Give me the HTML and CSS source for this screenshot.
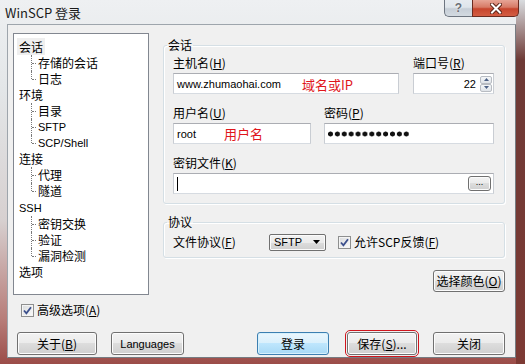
FILE: index.html
```html
<!doctype html>
<html>
<head>
	<meta charset="utf-8">
	<title>WinSCP 登录</title>
	<link rel="stylesheet" href="styles.css">
</head>
<body>
	<div class="window">
		<div class="titlebar">
			<span class="title">WinSCP 登录</span>
			<div class="caption">
				<span class="cap help">?</span>
				<span class="cap close">
					<svg width="12" height="11" viewBox="0 0 12 11">
						<path d="M2 1.5 L10 9.5 M10 1.5 L2 9.5" stroke="#5b2418" stroke-width="4" stroke-linecap="square"/>
						<path d="M2 1.5 L10 9.5 M10 1.5 L2 9.5" stroke="#fff" stroke-width="2" stroke-linecap="square"/>
					</svg>
				</span>
			</div>
		</div>

		<div class="client">
			<div class="main">
				<div class="left">
					<ul class="tree">
						<li><span class="sel">会话</span>
							<ul class="sub">
								<li>存储的会话</li>
								<li>日志</li>
							</ul>
						</li>
						<li>环境
							<ul class="sub">
								<li>目录</li>
								<li class="lat">SFTP</li>
								<li class="lat">SCP/Shell</li>
							</ul>
						</li>
						<li>连接
							<ul class="sub">
								<li>代理</li>
								<li>隧道</li>
							</ul>
						</li>
						<li><span class="lat">SSH</span>
							<ul class="sub">
								<li>密钥交换</li>
								<li>验证</li>
								<li>漏洞检测</li>
							</ul>
						</li>
						<li>选项</li>
					</ul>
					<div class="check adv">
						<span class="cbox"><svg width="9" height="9" viewBox="0 0 9 9"><path d="M1 4.5 L3.4 7.3 L8 1.2" fill="none" stroke="#3b4f8c" stroke-width="1.8"/></svg></span>
						<span>高级选项(<u>A</u>)</span>
					</div>
				</div>

				<div class="right">
					<fieldset class="group session">
						<legend>会话</legend>
						<div class="row">
							<div class="field host">
								<label>主机名(<u>H</u>)</label>
								<div class="edit">www.zhumaohai.com<span class="note note-host">域名或IP</span></div>
							</div>
							<div class="field port">
								<label>端口号(<u>R</u>)</label>
								<div class="edit num">
									<span class="val">22</span>
									<span class="spin">
										<span class="sp up"><svg width="5" height="3" viewBox="0 0 5 3"><path d="M0 3 L2.5 0 L5 3Z" fill="#4d6185"/></svg></span>
										<span class="sp dn"><svg width="5" height="3" viewBox="0 0 5 3"><path d="M0 0 L2.5 3 L5 0Z" fill="#4d6185"/></svg></span>
									</span>
								</div>
							</div>
						</div>
						<div class="row row-2">
							<div class="field user">
								<label>用户名(<u>U</u>)</label>
								<div class="edit">root<span class="note note-user">用户名</span></div>
							</div>
							<div class="field pass">
								<label>密码(<u>P</u>)</label>
								<div class="edit"><span class="dots"></span></div>
							</div>
						</div>
						<div class="row">
							<div class="field key">
								<label>密钥文件(<u>K</u>)</label>
								<div class="edit">
									<span class="caret"></span>
									<span class="browse">...</span>
								</div>
							</div>
						</div>
					</fieldset>

					<fieldset class="group proto">
						<legend>协议</legend>
						<div class="proto-row">
							<span class="proto-label">文件协议(<u>F</u>)</span>
							<span class="combo"><span>SFTP</span><svg width="7" height="4" viewBox="0 0 7 4"><path d="M0 0 L7 0 L3.5 4Z" fill="#000"/></svg></span>
							<span class="check">
								<span class="cbox"><svg width="9" height="9" viewBox="0 0 9 9"><path d="M1 4.5 L3.4 7.3 L8 1.2" fill="none" stroke="#3b4f8c" stroke-width="1.8"/></svg></span>
								<span>允许SCP反馈(<u>F</u>)</span>
							</span>
						</div>
					</fieldset>

					<div class="color-row">
						<span class="btn btn-color">选择颜色(<u>O</u>)</span>
					</div>
				</div>
			</div>

			<div class="buttons">
				<div class="grp">
					<span class="btn btn-about">关于(<u>B</u>)</span>
					<span class="btn btn-lang">Languages</span>
				</div>
				<div class="grp">
					<span class="btn btn-default">登录</span>
					<span class="btn btn-save">保存(<u>S</u>)...</span>
					<span class="btn btn-close">关闭</span>
				</div>
			</div>
		</div>
	</div>
</body>
</html>
```

FILE: styles.css
```css
* { margin: 0; padding: 0; box-sizing: border-box; }
body { width: 525px; height: 364px; overflow: hidden; font: 12px "Noto Sans CJK SC", "Liberation Sans", sans-serif; color: #000; }
u { text-decoration: underline; text-underline-offset: 1px; }

/* window frame */
.window { width: 525px; height: 364px; display: flex; flex-direction: column;
	background:
		linear-gradient(to bottom, #d9dcdf 0, #6e3a36 60px, #7d3a34 100%) right top / 9px 100% no-repeat,
		linear-gradient(to bottom, #eef0f2 0, #e3e6e8 90px, #d7d0d0 220px, #b77c78 320px, #9b4c48 100%); }
.titlebar { height: 24px; display: flex; justify-content: space-between; }
.title { padding: 4px 0 0 5px; font-size: 13px; line-height: 17px; color: #1a1a1a; }
.caption { display: flex; height: 17px; margin-right: 6px; }
.cap { display: flex; align-items: center; justify-content: center; height: 17px; border: 1px solid #6d7580; border-top: 0; }
.help { width: 28px; border-radius: 0 0 0 5px; border-right: 0; color: #6a6f76; font: bold 12px "Liberation Sans", sans-serif; text-shadow: 0 0 2px #fff;
	background: linear-gradient(#e6ebf0 0, #dfe5eb 45%, #c6ced7 55%, #d3dae1 100%); }
.close { width: 47px; border-color: #6b2b20; border-radius: 0 0 5px 0;
	background: linear-gradient(#e7a596 0, #d77a66 45%, #c7452d 55%, #d35d43 100%); }

/* client area */
.client { width: 509px; height: 334px; margin-left: 7px; display: flex; flex-direction: column;
	background: #f0f0f0; border: 1px solid #9ea5ac; border-right-color: #767c82; border-bottom-color: #767c82;
	padding: 8px 10px 2px 5px; }
.main { display: flex; gap: 14px; }
.left { width: 136px; }
.right { width: 342px; }

/* tree */
.tree { height: 262px; list-style: none; background: #fff; border: 1px solid #828790; padding: 5px 0 0 5px; line-height: 16px; }
.tree ul { list-style: none; }
.tree .sel { background: #efefef; margin-left: -2px; padding: 0 2px; }
.tree .lat, .lat { font: 11px "Liberation Sans", sans-serif; line-height: 16px; }
.sub li { position: relative; padding-left: 19px; }
.sub li::before { content: ""; position: absolute; left: 12px; top: 0; height: 100%; border-left: 1px dotted #7a7a7a; }
.sub li:last-child::before { height: 8px; }
.sub li::after { content: ""; position: absolute; left: 13px; top: 8px; width: 4px; border-top: 1px dotted #7a7a7a; }

/* checkbox */
.check { display: flex; align-items: center; gap: 3px; line-height: 16px; }
.adv { margin: 7px 0 0 8px; }
.cbox { width: 13px; height: 13px; border: 1px solid #8e8f8f; background: linear-gradient(135deg, #d8dadc, #fbfbfb);
	box-shadow: inset 0 0 0 1px #f4f4f4; display: flex; align-items: center; justify-content: center; }

/* group boxes */
.group { border: 1px solid #d5dfe5; border-radius: 3px; box-shadow: inset 1px 1px 0 #fff, 1px 1px 0 #fff; padding: 0 10px 9px 9px; }
.group legend { margin-left: -6px; padding: 0 1px; line-height: 16px; }
.session { margin-top: 4px; padding-top: 2px; }
.row { display: flex; gap: 14px; }
.row + .row { margin-top: 11px; }
.row-2 { gap: 13px; }
.field label { display: block; line-height: 16px; margin-bottom: 2px; }
.edit { height: 21px; display: flex; align-items: center; position: relative; background: #fff; padding: 0 3px;
	border: 1px solid; border-color: #abadb3 #c9cdd3 #d6dbe1 #c9cdd3; font: 11px "Liberation Sans", sans-serif; }
.host { width: 226px; }
.port { width: 81px; }
.user { width: 138px; }
.pass { width: 170px; }
.key { width: 321px; }
.note { position: absolute; top: 2px; color: #e0161b; font: 13px "Noto Sans CJK SC", sans-serif; line-height: 17px; }
.note-host { left: 128px; }
.note-user { left: 50px; top: 1px; }
.num { justify-content: flex-end; padding-right: 1px; }
.num .val { margin-right: 4px; }
.spin { display: flex; flex-direction: column; gap: 0; }
.sp { width: 12px; height: 8px; display: flex; align-items: center; justify-content: center; border: 1px solid #b8bcc2; border-radius: 2px;
	background: linear-gradient(#f5f7f9, #dfe3e8); }
.dots { width: 82px; height: 6px; background: radial-gradient(circle at 2.5px 3px, #111 2.2px, transparent 2.8px) 0 0 / 6.9px 6px repeat-x; }
.caret { width: 1px; height: 14px; background: #000; }
.browse { margin-left: auto; margin-right: -1px; width: 23px; height: 15px; border: 1px solid #707070; border-radius: 3px;
	background: linear-gradient(#f2f2f2 0, #ebebeb 50%, #dddddd 50%, #cfcfcf 100%); box-shadow: inset 0 0 0 1px #fbfbfb;
	font-size: 9px; line-height: 11px; text-align: center; }

.proto { margin-top: 10px; padding-bottom: 5px; }
.proto-row { display: flex; align-items: center; height: 20px; margin-top: 2px; }
.proto-label { width: 96px; line-height: 16px; }
.combo { width: 57px; height: 17px; display: flex; align-items: center; justify-content: space-between; padding: 0 5px 0 4px; margin-right: 12px;
	border: 1px solid #707070; border-radius: 2px; background: linear-gradient(#f2f2f2 0, #ebebeb 50%, #dddddd 50%, #cfcfcf 100%);
	box-shadow: inset 0 0 0 1px #fbfbfb; font: 11px "Liberation Sans", sans-serif; }

/* buttons */
.btn { height: 22px; display: flex; align-items: center; justify-content: center; border: 1px solid #707070; border-radius: 3px;
	background: linear-gradient(#f2f2f2 0, #ebebeb 50%, #dddddd 50%, #cfcfcf 100%); box-shadow: inset 0 0 0 1px #fcfcfc; line-height: 16px; }
.color-row { display: flex; justify-content: flex-end; margin-top: 12px; }
.btn-color { width: 72px; }
.buttons { margin-top: auto; display: flex; justify-content: space-between; padding-left: 4px; }
.buttons .btn { height: 23px; }
.grp { display: flex; gap: 14px; }
.btn-about { width: 80px; }
.btn-lang { width: 73px; font: 11px "Liberation Sans", sans-serif; }
.btn-default { width: 72px; border-color: #3c7fb1; box-shadow: inset 0 0 0 1px #d6f0fc;
	background: linear-gradient(#eaf6fd 0, #d9f0fc 50%, #bee6fd 50%, #a7d9f5 100%); margin-right: 4px; }
.btn-save { width: 70px; outline: 1px solid #d0151d; outline-offset: 1px; margin-right: 2px; }
.btn-close { width: 72px; }
```
